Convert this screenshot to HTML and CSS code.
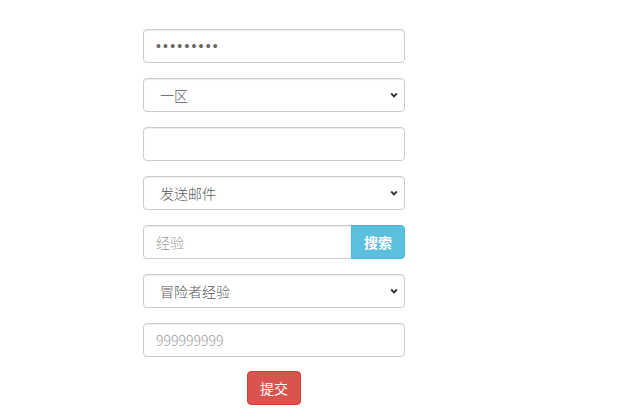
FILE: index.html
```html
<!DOCTYPE html>
<html lang="zh">
<head>
<meta charset="utf-8">
<link rel="stylesheet" href="styles.css">
</head>
<body>
<form class="form">
  <div class="form-group"><input class="form-control" type="password" value="123456789"></div>
  <div class="form-group">
    <select class="form-control select"><option>一区</option></select>
  </div>
  <div class="form-group"><input class="form-control" type="text"></div>
  <div class="form-group">
    <select class="form-control select"><option>发送邮件</option></select>
  </div>
  <div class="form-group input-group">
    <input class="form-control group-input" type="text" placeholder="经验">
    <button class="btn btn-info" type="button">搜索</button>
  </div>
  <div class="form-group">
    <select class="form-control select"><option>冒险者经验</option></select>
  </div>
  <div class="form-group last"><input class="form-control" type="text" placeholder="999999999"></div>
  <div class="actions"><button class="btn btn-danger" type="button">提交</button></div>
</form>
</body>
</html>
```
FILE: styles.css
```css
html, body {
  margin: 0;
  padding: 0;
  background: #fff;
}
body {
  font-family: "Noto Sans CJK SC", "Open Sans", sans-serif;
  font-size: 14px;
  color: #555;
}
.form {
  width: 262px;
  margin: 0;
  padding: 29px 0 0 143px;
}
.form-group {
  margin-bottom: 15px;
}
.form-group.last {
  margin-bottom: 14px;
}
.form-control {
  display: block;
  box-sizing: border-box;
  width: 100%;
  height: 34px;
  padding: 6px 12px;
  font-family: "Noto Sans CJK SC", sans-serif;
  font-size: 14px;
  font-weight: 300;
  line-height: 20px;
  color: #555;
  background: #fff;
  border: 1px solid #ccc;
  border-radius: 4px;
  box-shadow: inset 0 1px 1px rgba(0,0,0,.075);
  outline: none;
}
.form-control::placeholder {
  color: #999;
  font-weight: 300;
}
input[type="password"].form-control {
  font-family: "Liberation Sans", sans-serif;
  font-size: 14px;
  letter-spacing: 2.2px;
  color: #666;
  padding-left: 12px;
}
.select {
  -webkit-appearance: none;
  appearance: none;
  padding-left: 16px;
  background-image: url("data:image/svg+xml;utf8,<svg xmlns='http://www.w3.org/2000/svg' width='8' height='6' viewBox='0 0 8 6'><path d='M1.2 1.5 L4 4.3 L6.8 1.5' fill='none' stroke='%23333' stroke-width='1.9'/></svg>");
  background-repeat: no-repeat;
  background-position: right 6px center;
  background-size: 8px 6px;
}
.input-group {
  display: flex;
}
.group-input {
  flex: 1;
  width: auto;
  border-top-right-radius: 0;
  border-bottom-right-radius: 0;
}
.btn {
  box-sizing: border-box;
  height: 34px;
  padding: 6px 12px;
  font-family: "Noto Sans CJK SC", sans-serif;
  font-size: 14px;
  line-height: 20px;
  border: 1px solid transparent;
  border-radius: 4px;
  color: #fff;
  cursor: pointer;
}
.btn-info {
  width: 54px;
  background: #5bc0de;
  border-color: #46b8da;
  border-top-left-radius: 0;
  border-bottom-left-radius: 0;
  margin-left: -1px;
  font-weight: 700;
}
.btn-danger {
  width: 54px;
  background: #d9534f;
  border-color: #d43f3a;
  font-weight: 400;
}
.actions {
  display: flex;
  justify-content: center;
}
```
